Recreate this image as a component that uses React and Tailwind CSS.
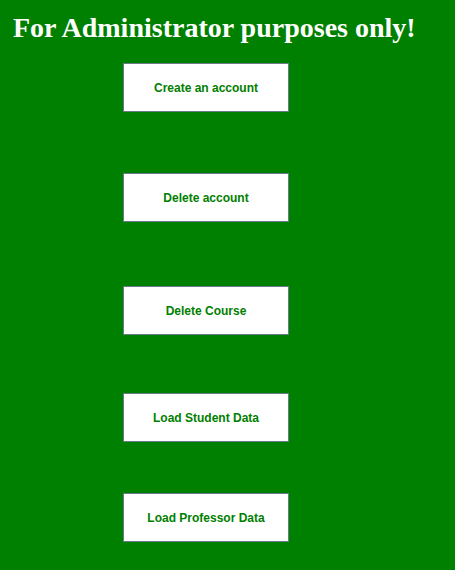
export default function App() {
  const btn =
    "w-[166px] h-[49px] bg-white border border-[#6b7a8a] text-[#008000] font-bold text-[12px] font-['Liberation_Sans',Arial,sans-serif] flex items-center justify-center";
  return (
    <div className="w-[455px] h-[570px] bg-[#008000] overflow-hidden">
      <h1 className="pl-[13px] pt-[12px] text-white font-bold text-[28px] leading-[32px] font-['Liberation_Serif','Times_New_Roman',serif]">
        For Administrator purposes only!
      </h1>
      <div className="flex flex-col pl-[123px]">
        <button className={btn + " mt-[19px]"}>Create an account</button>
        <button className={btn + " mt-[61px]"}>Delete account</button>
        <button className={btn + " mt-[64px]"}>Delete Course</button>
        <button className={btn + " mt-[58px]"}>Load Student Data</button>
        <button className={btn + " mt-[51px]"}>Load Professor Data</button>
      </div>
    </div>
  );
}
